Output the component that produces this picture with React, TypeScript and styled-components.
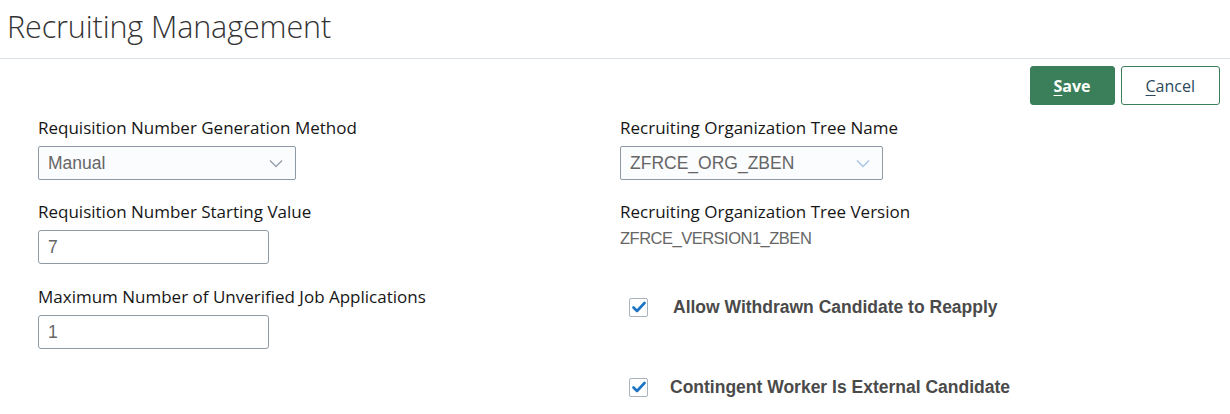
import styled, { createGlobalStyle } from "styled-components";

const GlobalStyle = createGlobalStyle`
  body {
    margin: 0;
    background: #fff;
    font-family: "Open Sans", "Noto Sans", sans-serif;
  }
`;

const Page = styled.div`
  width: 1230px;
  height: 414px;
  overflow: hidden;
`;

const Header = styled.header`
  padding: 4px 0 0 7px;
  height: 59px;
  border-bottom: 1px solid #dbe3ea;
  box-sizing: border-box;
`;

const Title = styled.h1`
  margin: 0;
  font-family: "Open Sans", sans-serif;
  font-weight: 300;
  font-size: 30.5px;
  line-height: 44px;
  color: #333;
  letter-spacing: -0.1px;
`;

const Toolbar = styled.div`
  display: flex;
  justify-content: flex-end;
  gap: 6px;
  padding: 7px 10px 0 0;
`;

const ActionButton = styled.button<{ $primary?: boolean }>`
  height: 39px;
  padding: 0 ${(p) => (p.$primary ? "23px" : "24px")};
  border-radius: 3px;
  font-family: "Open Sans", sans-serif;
  font-size: 16px;
  font-weight: ${(p) => (p.$primary ? 700 : 400)};
  background: ${(p) => (p.$primary ? "#3b7f5a" : "#fff")};
  color: ${(p) => (p.$primary ? "#fff" : "#2c4a5c")};
  border: 1px solid #3b7f5a;
  cursor: pointer;
  u {
    text-underline-offset: 3px;
  }
`;

const Form = styled.div`
  display: grid;
  grid-template-columns: 582px 1fr;
  padding: 11px 0 0 38px;
`;

const Column = styled.div`
  display: flex;
  flex-direction: column;
`;

const Field = styled.div<{ $gap?: number }>`
  display: flex;
  flex-direction: column;
  margin-bottom: ${(p) => p.$gap ?? 20}px;
`;

const Label = styled.label`
  font-family: "Open Sans", sans-serif;
  font-size: 17px;
  line-height: 24px;
  color: #161616;
  margin-bottom: 6px;
  white-space: nowrap;
`;

const SelectBox = styled.div<{ $width: number }>`
  width: ${(p) => p.$width}px;
  height: 34px;
  box-sizing: border-box;
  border: 1px solid #8e9aa5;
  border-radius: 2px;
  background: #fbfcfe;
  display: flex;
  align-items: center;
  justify-content: space-between;
  padding: 0 12px 0 9px;
  font-family: "Liberation Sans", Arial, sans-serif;
  font-size: 17.5px;
  color: #666;
`;

const TextInput = styled.input<{ $width: number }>`
  width: ${(p) => p.$width}px;
  height: 34px;
  box-sizing: border-box;
  border: 1px solid #8e9aa5;
  border-radius: 3px;
  padding: 0 9px;
  font-family: "Liberation Sans", Arial, sans-serif;
  font-size: 17.5px;
  color: #666;
  outline: none;
`;

const ReadOnly = styled.div`
  font-family: "Liberation Sans", Arial, sans-serif;
  font-size: 16.5px;
  letter-spacing: -0.5px;
  color: #666;
  line-height: 20px;
  margin-top: -2px;
`;

const CheckRow = styled.label<{ $top: number; $labelGap: number }>`
  display: flex;
  align-items: center;
  height: 20px;
  gap: ${(p) => p.$labelGap}px;
  margin-top: ${(p) => p.$top}px;
  padding-left: 9px;
  font-family: "Liberation Sans", Arial, sans-serif;
  font-weight: 700;
  font-size: 17.5px;
  color: #4a4a4a;
`;

const Box = styled.span`
  width: 19px;
  height: 19px;
  box-sizing: border-box;
  border: 1px solid #a8b3bd;
  border-radius: 2px;
  background: #fff;
  display: flex;
  align-items: center;
  justify-content: center;
`;

const Chevron = ({ color }: { color: string }) => (
  <svg width="14" height="9" viewBox="0 0 14 9" fill="none">
    <path d="M1 1.5 L7 7.5 L13 1.5" stroke={color} strokeWidth="1.5" />
  </svg>
);

const Check = () => (
  <Box>
    <svg width="14" height="12" viewBox="0 0 14 12" fill="none">
      <path
        d="M1.5 6.5 L5 10 L12.5 2"
        stroke="#1a73c4"
        strokeWidth="2.6"
        strokeLinecap="round"
        strokeLinejoin="round"
      />
    </svg>
  </Box>
);

export default function App() {
  return (
    <Page>
      <GlobalStyle />
      <Header>
        <Title>Recruiting Management</Title>
      </Header>
      <Toolbar>
        <ActionButton $primary>
          <u>S</u>ave
        </ActionButton>
        <ActionButton>
          <u>C</u>ancel
        </ActionButton>
      </Toolbar>
      <Form>
        <Column>
          <Field>
            <Label>Requisition Number Generation Method</Label>
            <SelectBox $width={258}>
              Manual
              <Chevron color="#9aa3ab" />
            </SelectBox>
          </Field>
          <Field $gap={21}>
            <Label>Requisition Number Starting Value</Label>
            <TextInput $width={231} defaultValue="7" />
          </Field>
          <Field>
            <Label>Maximum Number of Unverified Job Applications</Label>
            <TextInput $width={231} defaultValue="1" />
          </Field>
        </Column>
        <Column>
          <Field>
            <Label>Recruiting Organization Tree Name</Label>
            <SelectBox $width={263}>
              ZFRCE_ORG_ZBEN
              <Chevron color="#a9c6e2" />
            </SelectBox>
          </Field>
          <Field $gap={0}>
            <Label>Recruiting Organization Tree Version</Label>
            <ReadOnly>ZFRCE_VERSION1_ZBEN</ReadOnly>
          </Field>
          <CheckRow $top={49} $labelGap={25}>
            <Check />
            Allow Withdrawn Candidate to Reapply
          </CheckRow>
          <CheckRow $top={60} $labelGap={22}>
            <Check />
            Contingent Worker Is External Candidate
          </CheckRow>
        </Column>
      </Form>
    </Page>
  );
}
